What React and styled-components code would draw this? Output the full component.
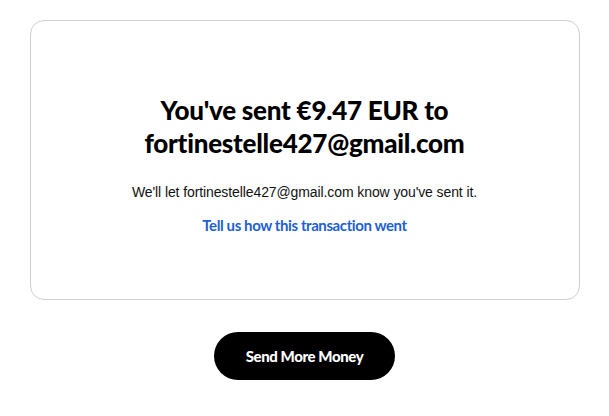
import React from "react";
import styled, { createGlobalStyle } from "styled-components";

const GlobalStyle = createGlobalStyle`
  html, body {
    margin: 0;
    padding: 0;
    background: #ffffff;
  }
  body {
    font-family: "Liberation Sans", Arial, sans-serif;
    color: #000;
  }
`;

const Page = styled.div`
  display: flex;
  flex-direction: column;
  align-items: center;
  padding-top: 20px;
`;

const Card = styled.div`
  box-sizing: border-box;
  width: 550px;
  height: 280px;
  padding-top: 8px;
  border: 1px solid #cfcfcf;
  border-radius: 14px;
  display: flex;
  flex-direction: column;
  align-items: center;
  justify-content: center;
  text-align: center;
`;

const Title = styled.h1`
  margin: 0;
  font-family: Lato, "Open Sans", sans-serif;
  font-weight: 900;
  font-size: 26px;
  line-height: 33px;
  letter-spacing: -0.25px;
  color: #000;
`;

const Note = styled.p`
  margin: 23px 0 0;
  font-family: "Liberation Sans", Arial, sans-serif;
  font-size: 14px;
  line-height: 18px;
  letter-spacing: -0.1px;
  color: #111;
`;

const FeedbackLink = styled.a`
  margin-top: 15px;
  font-family: Lato, sans-serif;
  font-weight: 700;
  font-size: 15px;
  letter-spacing: -0.4px;
  line-height: 18px;
  color: #1e5fd3;
  text-decoration: none;
  cursor: pointer;
`;

const SendButton = styled.button`
  margin-top: 32px;
  width: 181px;
  height: 48px;
  border: none;
  border-radius: 24px;
  background: #000;
  color: #fff;
  font-family: Lato, sans-serif;
  font-weight: 900;
  font-size: 15px;
  letter-spacing: -0.4px;
  cursor: pointer;
`;

export default function App() {
  return (
    <>
      <GlobalStyle />
      <Page>
        <Card>
          <Title>
            You've sent €9.47 EUR to
            <br />
            fortinestelle427@gmail.com
          </Title>
          <Note>We'll let fortinestelle427@gmail.com know you've sent it.</Note>
          <FeedbackLink>Tell us how this transaction went</FeedbackLink>
        </Card>
        <SendButton>Send More Money</SendButton>
      </Page>
    </>
  );
}
